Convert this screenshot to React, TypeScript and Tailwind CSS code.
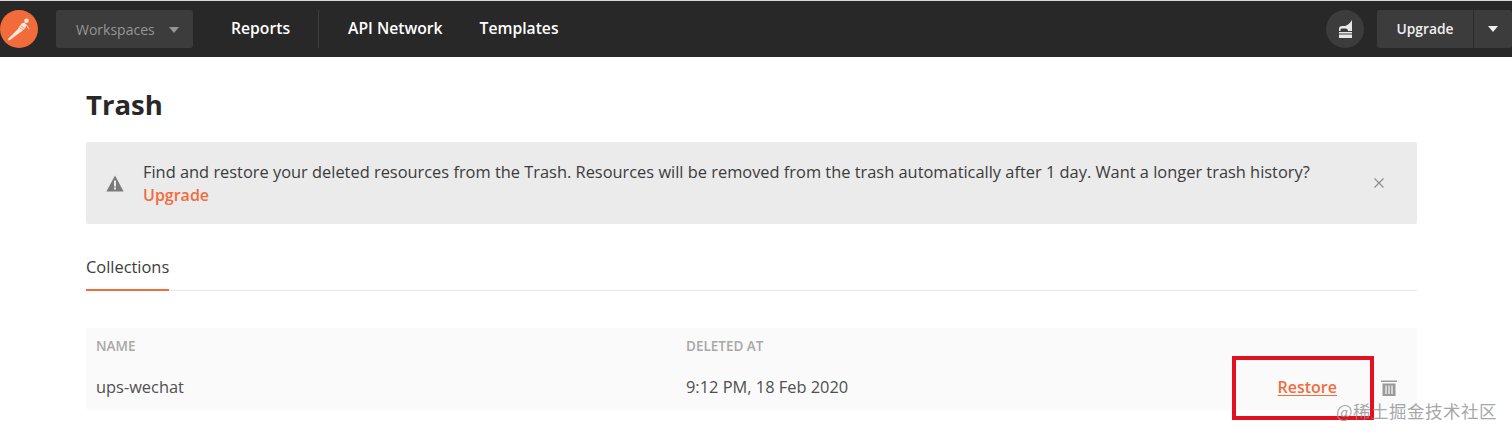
import React from 'react';

const Logo = () => (
  <svg width="38" height="38" viewBox="0 0 38 38" className="shrink-0">
    <circle cx="19" cy="19" r="19" fill="#f26b3a" />
    <path d="M8 30.5 L8.5 28.5 L17 20 L19 18 L22 21 L20 22.5 L10 30 Z" fill="#fde9df" />
    <path d="M18 18.5 L21.5 13.5 L24.5 12.5 L26.5 15 L25 18.5 L21.5 21.5 Z" fill="#fde9df" />
    <circle cx="26.5" cy="10.8" r="2.3" fill="#fde9df" />
    <path d="M20.5 15.5 L24.5 18.5 M19.5 17.5 L23 20" stroke="#f26b3a" strokeWidth="0.7" />
    <path d="M26 14.5 L29 19" stroke="#fde9df" strokeWidth="1" />
  </svg>
);

const Gramophone = () => (
  <svg width="15" height="20" viewBox="0 0 15 20" className="ml-[1px]">
    <path d="M14 1 V12 H10 C10 10.5 9 9.5 7.5 9.5 H4 C3 9.5 2.5 10 2.5 11 V12 H1 V9.5 C1 8 2.5 7 4 7 H7 C9.5 6.5 12 4 14 1 Z" fill="#e8e8e8" />
    <rect x="1" y="13" width="13" height="1.5" fill="#e8e8e8" />
    <rect x="1" y="15.5" width="13" height="3.5" fill="#e8e8e8" />
  </svg>
);

const Caret = ({ color }: { color: string }) => (
  <svg width="10" height="6" viewBox="0 0 10 6">
    <path d="M0 0 H10 L5 6 Z" fill={color} />
  </svg>
);

export default function App() {
  return (
    <div className="h-[437px] w-[1512px] overflow-hidden bg-white font-['Open_Sans',sans-serif]">
      {/* Top bar */}
      <header className="flex h-[57px] items-center border-t border-[#d8d8d8] bg-[#282828] text-white">
        <Logo />
        <button className="ml-[18px] flex h-[38px] w-[137px] items-center rounded-[3px] bg-[#3c3c3c] pl-5 text-[14px] text-[#959595]">
          Workspaces
          <span className="ml-[14px] mt-[2px] flex"><Caret color="#959595" /></span>
        </button>
        <nav className="ml-[38px] flex items-center text-[15.7px] font-semibold">
          <a className="-mt-[1px]">Reports</a>
          <span className="ml-7 mr-[29px] h-[38px] w-px bg-[#3f3f3f]"></span>
          <a className="-mt-[1px]">API Network</a>
          <a className="-mt-[1px] ml-[37px]">Templates</a>
        </nav>
        <div className="ml-auto flex items-center">
          <span className="flex h-[38px] w-[38px] items-center justify-center rounded-full bg-[#3c3c3c]">
            <Gramophone />
          </span>
          <div className="ml-[13px] flex h-[38px] w-[135px] items-center rounded-[3px] bg-[#3c3c3c] text-[13.8px] font-semibold text-[#f0f0f0]">
            <span className="w-[96px] text-center">Upgrade</span>
            <span className="h-full w-px bg-[#2a2a2a]"></span>
            <span className="flex flex-1 items-center justify-center"><Caret color="#f0f0f0" /></span>
          </div>
        </div>
      </header>

      <main className="px-[86px] pr-[95px]">
        <h1 className="mt-[30px] text-[27.5px] font-bold leading-[36px] text-[#282828]">Trash</h1>

        {/* Notice */}
        <div className="mt-[19px] flex h-[82px] items-center rounded-[2px] bg-[#ebebeb] pl-5 pr-[33px]">
          <svg width="18" height="17" viewBox="0 0 18 17" className="shrink-0">
            <path d="M9 0.5 L17.6 16.5 H0.4 Z" fill="#7a7a7a" />
            <rect x="8" y="5.5" width="2" height="6" fill="#ebebeb" />
            <rect x="8" y="12.5" width="2" height="2" fill="#ebebeb" />
          </svg>
          <p className="ml-[19px] w-[1190px] text-[16.4px] leading-[23px] text-[#3c3c3c]">
            Find and restore your deleted resources from the Trash. Resources will be removed from the trash automatically after 1 day. Want a longer trash history?{' '}
            <a className="text-[16px] font-semibold text-[#f26b3a]">Upgrade</a>
          </p>
          <svg width="10" height="10" viewBox="0 0 10 10" className="ml-auto shrink-0">
            <path d="M0.5 0.5 L9.5 9.5 M9.5 0.5 L0.5 9.5" stroke="#8c8c8c" strokeWidth="1.2" />
          </svg>
        </div>

        {/* Tabs */}
        <div className="mt-[31px] flex h-[36px] border-b border-[#e6e6e6]">
          <span className="h-[36px] border-b-2 border-[#f26b3a] text-[16.4px] leading-[24px] text-[#3c3c3c]">Collections</span>
        </div>

        {/* Table */}
        <div className="mt-[37px] rounded-[3px] bg-[#fafafa]">
          <div className="flex h-[36px] items-center pl-[10px] text-[13.5px] font-semibold text-[#a8a8a8]">
            <span className="w-[590px]">NAME</span>
            <span>DELETED AT</span>
          </div>
          <div className="flex h-[46px] items-center pl-[10px] text-[16.4px] text-[#505050]">
            <span className="w-[590px]">ups-wechat</span>
            <span>9:12 PM, 18 Feb 2020</span>
            <div className="ml-auto flex items-center pr-[20px]">
              <a className="text-[16px] font-semibold text-[#f26b3a] underline underline-offset-2">Restore</a>
              <svg width="16" height="17" viewBox="0 0 16 17" className="ml-[44px]">
                <path d="M0 1.5 H16 V3 H0 Z M1.5 4.5 H14.5 V17 H1.5 Z" fill="#9a9a9a" />
                <path d="M5 6.5 V15 M8 6.5 V15 M11 6.5 V15" stroke="#fafafa" strokeWidth="1.2" />
              </svg>
            </div>
          </div>
        </div>
      </main>

      {/* Annotation and watermark laid over the screenshot */}
      <div className="absolute left-[1232px] top-[356px] h-[64px] w-[142px] border-[4px] border-[#e3101f]"></div>
      <span className="absolute left-[1336px] top-[399px] font-['Noto_Sans_CJK_SC',sans-serif] text-[17.5px] leading-[24px] tracking-[0.5px] text-[#8f8f8f]/80">@稀土掘金技术社区</span>
    </div>
  );
}
